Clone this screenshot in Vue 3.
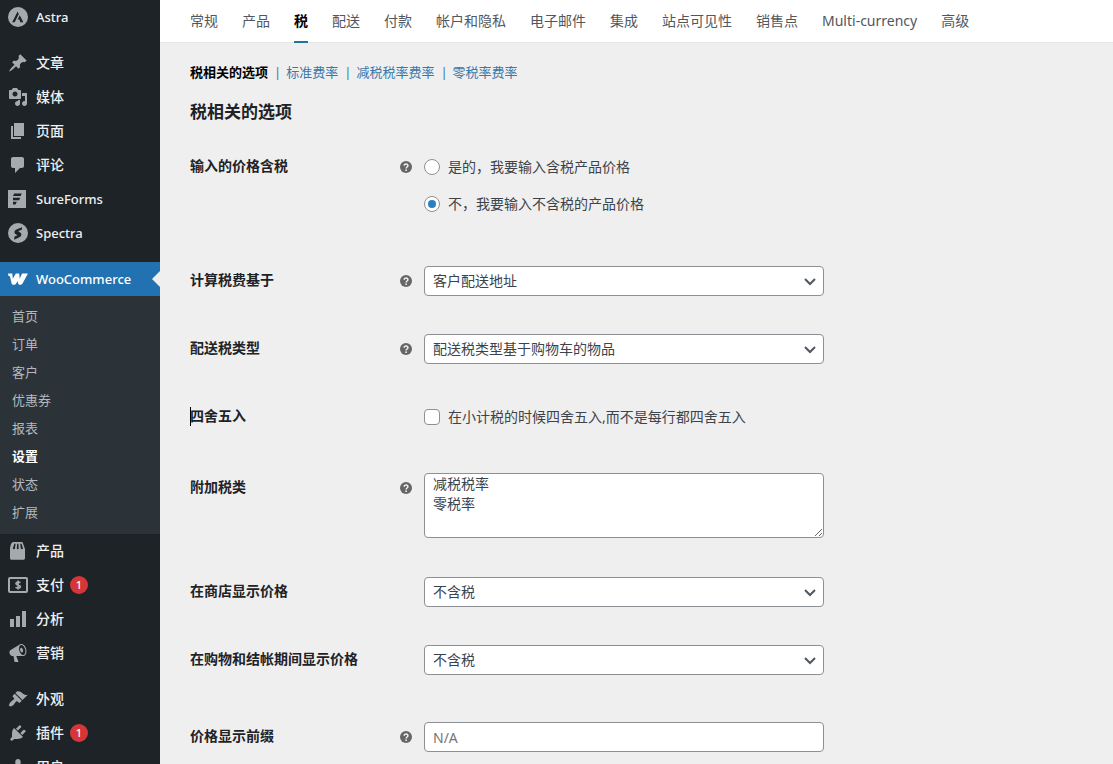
<script setup>
import { ref } from 'vue'

const icons = {
  astra:
    '<path fill-rule="evenodd" d="M10 0a10 10 0 1 0 0 20a10 10 0 0 0 0-20zM9.6 4.4L4.2 15.2h2.5l4.1-8.2zM11.8 8.2l-2.2 4.3h1.8l.9 2.7h3z"/>',
  pin: '<path d="M10.44 3.02l1.82-1.82 6.36 6.35-1.83 1.82c-1.05-.68-2.48-.57-3.41.36l-.75.75c-.92.93-1.04 2.35-.35 3.41l-1.83 1.82-2.41-2.41-2.8 2.79c-.42.42-3.38 2.71-3.8 2.29s1.86-3.39 2.28-3.81l2.79-2.79L4.1 9.36l1.83-1.82c1.05.69 2.48.57 3.4-.36l.75-.75c.93-.92 1.05-2.35.36-3.41z"/>',
  media:
    '<path d="M13 11V4c0-.55-.45-1-1-1h-1.67L9 1H5L3.67 3H2c-.55 0-1 .45-1 1v7c0 .55.45 1 1 1h10c.55 0 1-.45 1-1zM7 4.5c1.38 0 2.5 1.12 2.5 2.5S8.38 9.5 7 9.5 4.5 8.38 4.5 7 5.62 4.5 7 4.5zM14 6h5v10.5c0 1.38-1.12 2.5-2.5 2.5S14 17.88 14 16.5s1.12-2.5 2.5-2.5c.17 0 .34.02.5.05V9h-3V6zm-4 8.05V13h2v3.5c0 1.38-1.12 2.5-2.5 2.5S7 17.88 7 16.5 8.12 14 9.5 14c.17 0 .34.02.5.05z"/>',
  page: '<path d="M6 15V2h10v13H6zm-1 1h8v2H3V5h2v11z"/>',
  comment:
    '<path d="M5 2h9c1.1 0 2 .9 2 2v7c0 1.1-.9 2-2 2h-2l-5 5v-5H5c-1.1 0-2-.9-2-2V4c0-1.1.9-2 2-2z"/>',
  sureforms:
    '<path fill-rule="evenodd" d="M0 1h18v18H0zM6.2 4.6h7.6l-1.2 2.4H5zM5 8.8h7.3l-1.2 2.4H5zM5 12.8h3.8l-1.3 2.6H5z"/>',
  spectra:
    '<path fill-rule="evenodd" d="M10 0a10 10 0 1 0 0 20a10 10 0 0 0 0-20zM14 4.2l-5.6 2.3c-2.4 1-2.6 3.6-.7 4.7l1.9 1.1-3.3 1.5v3l5-2.5c2.6-1.3 2.7-3.7.8-4.8L10.2 8.3 14 6.6z"/>',
  woo: '<path d="M.1 4.6h4.2l.5 5.2 3-5.2h3.4l.5 5.2 2.4-5.2h5.8l-5.2 9.6c-.7 1.2-1.5 1.6-2.5 1.6-1.2 0-1.900-.6-2.200-1.900l-.4-1.700-1.300 2.100c-.7 1.100-1.400 1.500-2.500 1.500-1.200 0-2-.5-2.300-1.900L2.200 8.300C2 7.300 1.600 7 .4 7z"/>',
  products:
    '<path fill-rule="evenodd" d="M5.500 1h9L17 8v9c0 1-.6 1.800-1.600 1.800H3.600C2.600 18.800 2 18 2 17V8c.3-3 1-7 3.500-7zM6.400 2.800L4.800 7.600c.6 1 2 .8 2.200-.4l.6-4.400zM9.200 2.800l-.4 4.600c.3 1 1.500 1 1.900 0l-.3-4.600zM12.200 2.800l.6 4.600c.3 1 1.700 1.100 2.200.2l-1.400-4.800z"/>',
  payments:
    '<g fill="none" stroke="currentColor"><rect x="1" y="3" width="18" height="14" rx="1" stroke-width="2"/><path stroke-width="1.700" d="M12.400 7.700C11.700 6.900 8 6.700 8 8.500c0 1.900 4.400 1.200 4.400 3.200 0 1.700-3.700 1.700-4.800.5M10.100 5.500v9"/></g>',
  chart: '<path d="M18 18V2h-4v16h4zm-6 0V7H8v11h4zm-6 0v-8H2v8h4z"/>',
  megaphone:
    '<path fill-rule="evenodd" d="M18.150 5.940c.46 1.620.38 3.220-.02 4.480-.42 1.280-1.260 2.180-2.300 2.480-.16.06-.26.06-.4.06-.06.02-.12.02-.18.02-.06.02-.14.02-.22.02h-6.800l2.220 5.500c.02.14-.06.26-.14.34-.08.1-.24.16-.34.16H6.950c-.1 0-.26-.06-.34-.16-.08-.08-.16-.2-.14-.34l-1-5.500H4.250l-.02-.02c-.5.06-1.080-.18-1.540-.62s-.88-1.080-1.060-1.880c-.24-.8-.2-1.560-.02-2.200.18-.62.58-1.080 1.060-1.300l.02-.02 9-5.400c.1-.06.18-.1.24-.16.06-.04.14-.08.24-.12.16-.08.28-.12.5-.18 1.040-.3 2.240.1 3.220.98s1.840 2.240 2.260 3.860zm-2.580 5.980h-.02c.4-.1.74-.34 1.040-.7.58-.7.86-1.760.86-3.040 0-.64-.1-1.300-.28-1.980-.34-1.360-1.020-2.500-1.780-3.240s-1.680-1.100-2.460-.88c-.82.22-1.400.96-1.700 2-.32 1.040-.28 2.360.06 3.720.38 1.360 1 2.500 1.800 3.240.78.74 1.620 1.100 2.480.88zm-2.540-7.080c.22-.04.42-.02.62.04.38.16.76.48 1.020 1s.42 1.200.42 1.780c0 .3-.04.56-.12.8-.18.48-.44.84-.86.94-.34.1-.8-.06-1.140-.4s-.64-.86-.78-1.500c-.18-.62-.12-1.240.02-1.720s.48-.84.82-.94z"/>',
  brush:
    '<path d="M14.480 11.060L7.410 3.990l1.500-1.500c.5-.56 2.300-.47 3.510.32 1.210.8 1.430 1.280 2.910 2.100 1.180.64 2.450 1.260 4.450.85zm-.71.71L6.700 4.700 4.930 6.470c-.39.39-.39 1.020 0 1.410l1.060 1.060c.39.39.39 1.030 0 1.420-.6.6-1.430 1.110-2.210 1.690-.35.26-.7.53-1.010.84C1.430 14.230.4 16.080 1.400 17.070c.99 1 2.840-.03 4.180-1.360.31-.31.58-.66.85-1.020.57-.78 1.080-1.610 1.690-2.210.39-.39 1.020-.39 1.410 0l1.060 1.060c.39.39 1.020.39 1.410 0z"/>',
  plug: '<path d="M13.110 4.360L9.870 7.600 8 5.730l3.240-3.240c.35-.34 1.050-.2 1.560.32.52.51.66 1.210.31 1.550zm-8 1.770l.91-1.120 9.010 9.010-1.190.84c-.71.71-2.630 1.160-3.820 1.160H6.140L4.900 17.260c-.59.59-1.540.59-2.120 0-.59-.58-.59-1.530 0-2.120l1.240-1.240v-3.880c0-1.130.4-3.190 1.090-3.890zm7.260 3.970l3.240-3.240c.34-.35 1.040-.21 1.550.31.52.51.66 1.210.31 1.550l-3.240 3.250z"/>',
  user: '<path d="M10 9.250c-2.270 0-2.730-3.440-2.730-3.440C7 4.020 7.820 2 9.970 2c2.160 0 2.980 2.020 2.710 3.810 0 0-.41 3.440-2.680 3.440zM4 18v-4c0-2.500 2-4 4-4h4c2 0 4 1.500 4 4v4z"/>'
}

const menu = [
  [{ label: 'Astra', icon: 'astra', latin: true }],
  [
    { label: '文章', icon: 'pin' },
    { label: '媒体', icon: 'media' },
    { label: '页面', icon: 'page' },
    { label: '评论', icon: 'comment' },
    { label: 'SureForms', icon: 'sureforms', latin: true },
    { label: 'Spectra', icon: 'spectra', latin: true }
  ],
  [
    {
      label: 'WooCommerce',
      icon: 'woo',
      latin: true,
      current: true,
      children: ['首页', '订单', '客户', '优惠券', '报表', '设置', '状态', '扩展']
    },
    { label: '产品', icon: 'products' },
    { label: '支付', icon: 'payments', count: 1 },
    { label: '分析', icon: 'chart' },
    { label: '营销', icon: 'megaphone' }
  ],
  [
    { label: '外观', icon: 'brush' },
    { label: '插件', icon: 'plug', count: 1 },
    { label: '用户', icon: 'user' }
  ]
]

const tabs = ['常规', '产品', '税', '配送', '付款', '帐户和隐私', '电子邮件', '集成', '站点可见性', '销售点', 'Multi-currency', '高级']
const sections = ['税相关的选项', '标准费率', '减税税率费率', '零税率费率']

const rows = [
  {
    id: 'prices-include-tax',
    label: '输入的价格含税',
    type: 'radio',
    help: true,
    options: [
      { value: 'yes', label: '是的，我要输入含税产品价格' },
      { value: 'no', label: '不，我要输入不含税的产品价格' }
    ]
  },
  { id: 'tax-based-on', label: '计算税费基于', type: 'select', help: true, value: '客户配送地址' },
  { id: 'shipping-tax-class', label: '配送税类型', type: 'select', help: true, value: '配送税类型基于购物车的物品' },
  { id: 'tax-round', label: '四舍五入', type: 'checkbox', text: '在小计税的时候四舍五入,而不是每行都四舍五入', caret: true },
  { id: 'tax-classes', label: '附加税类', type: 'textarea', help: true, value: '减税税率\n零税率' },
  { id: 'tax-display-shop', label: '在商店显示价格', type: 'select', value: '不含税' },
  { id: 'tax-display-cart', label: '在购物和结帐期间显示价格', type: 'select', value: '不含税' },
  { id: 'price-suffix', label: '价格显示前缀', type: 'text', help: true, placeholder: 'N/A' }
]

const includeTax = ref('no')
const roundSubtotal = ref(false)
</script>

<template>
  <div class="admin">
    <nav class="sidebar" aria-label="主菜单">
      <ul v-for="(group, g) in menu" :key="g" class="group">
        <li v-for="item in group" :key="item.label">
          <a href="#" class="item" :class="{ current: item.current, latin: item.latin }">
            <svg class="icon" viewBox="0 0 20 20" aria-hidden="true" v-html="icons[item.icon]"></svg>
            <span>{{ item.label }}</span>
            <span v-if="item.count" class="count">{{ item.count }}</span>
          </a>
          <ul v-if="item.children" class="submenu">
            <li v-for="child in item.children" :key="child">
              <a href="#" :class="{ active: child === '设置' }">{{ child }}</a>
            </li>
          </ul>
        </li>
      </ul>
    </nav>

    <main class="content">
      <nav class="tabs" aria-label="设置">
        <a v-for="tab in tabs" :key="tab" href="#" :class="{ active: tab === '税' }">{{ tab }}</a>
      </nav>

      <div class="page">
        <ul class="sections">
          <li v-for="(section, i) in sections" :key="section">
            <a href="#" :class="{ active: i === 0 }">{{ section }}</a>
            <span v-if="i < sections.length - 1" class="bar">|</span>
          </li>
        </ul>

        <h2>税相关的选项</h2>

        <form class="form" @submit.prevent>
          <div v-for="row in rows" :key="row.id" class="row" :class="'row-' + row.type">
            <span v-if="row.type === 'radio'" :id="row.id" class="label">{{ row.label }}</span>
            <label v-else :for="row.id" class="label" :class="{ caret: row.caret }">{{ row.label }}</label>

            <span class="help">
              <svg v-if="row.help" viewBox="0 0 12 12" role="img" aria-label="帮助">
                <circle cx="6" cy="6" r="6" fill="#666" />
                <path d="M4.200 4.700c0-2.300 3.700-2.200 3.700 0 0 1.300-1.800 1.300-1.800 2.700" fill="none" stroke="#efefef" stroke-width="1.500" />
                <circle cx="6.100" cy="9.200" r=".9" fill="#efefef" />
              </svg>
            </span>

            <div v-if="row.type === 'radio'" class="control choices" role="radiogroup" :aria-labelledby="row.id">
              <label v-for="opt in row.options" :key="opt.value" class="choice">
                <input v-model="includeTax" type="radio" :name="row.id" :value="opt.value" />
                <span>{{ opt.label }}</span>
              </label>
            </div>
            <div v-else-if="row.type === 'checkbox'" class="control">
              <label class="choice">
                <input :id="row.id" v-model="roundSubtotal" type="checkbox" />
                <span>{{ row.text }}</span>
              </label>
            </div>
            <div v-else-if="row.type === 'select'" class="control select">
              <select :id="row.id"><option>{{ row.value }}</option></select>
              <svg class="chevron" viewBox="0 0 12 8" aria-hidden="true">
                <path d="M1 1l5 5 5-5" fill="none" stroke="#50575e" stroke-width="2" />
              </svg>
            </div>
            <div v-else-if="row.type === 'textarea'" class="control">
              <textarea :id="row.id" :value="row.value"></textarea>
            </div>
            <div v-else class="control">
              <input :id="row.id" type="text" :placeholder="row.placeholder" />
            </div>
          </div>
        </form>
      </div>
    </main>
  </div>
</template>

<style>
html {
  background: #efefef;
}
</style>

<style scoped>
.admin,
.admin * {
  box-sizing: border-box;
}

.admin {
  display: flex;
  height: 100vh;
  overflow: hidden;
  background: #efefef;
  color: #3c434a;
  font-family: "Noto Sans", "Noto Sans CJK SC", sans-serif;
  font-size: 14px;
  line-height: 20px;
}

ul {
  margin: 0;
  padding: 0;
  list-style: none;
}

a {
  text-decoration: none;
}

.sidebar {
  flex: none;
  width: 160px;
  background: #1d2327;
}

.group + .group {
  margin-top: 12px;
}

.item {
  position: relative;
  display: flex;
  align-items: center;
  gap: 8px;
  height: 34px;
  padding: 0 8px;
  color: #f0f0f1;
  font-weight: 500;
}

.latin {
  font-size: 13px;
  font-weight: 500;
}

.icon {
  flex: none;
  width: 20px;
  height: 20px;
  fill: currentColor;
  color: #a7aaad;
}

.current {
  background: #2271b1;
  color: #fff;
}

.current .icon {
  color: #fff;
}

.current::after {
  content: "";
  position: absolute;
  right: 0;
  top: 9px;
  border: 8px solid transparent;
  border-left-width: 0;
  border-right-color: #efefef;
}

.count {
  width: 18px;
  height: 18px;
  margin-left: -2px;
  border-radius: 9px;
  background: #d63638;
  color: #fff;
  font-size: 11px;
  line-height: 18px;
  text-align: center;
}

.submenu {
  padding: 6px 0 8px;
  background: #2c3338;
}

.submenu a {
  display: block;
  padding: 4px 12px;
  color: #b4b9be;
  font-size: 13px;
}

.submenu .active {
  color: #fff;
  font-weight: 700;
}

.content {
  flex: 1;
  min-width: 0;
}

.tabs {
  display: flex;
  gap: 24px;
  height: 43px;
  padding: 0 30px;
  background: #fff;
  border-bottom: 1px solid #e6e6e6;
  white-space: nowrap;
}

.tabs a {
  height: 43px;
  line-height: 42px;
  color: #50575e;
}

.tabs .active {
  border-bottom: 2px solid #21759b;
  color: #000;
  font-weight: 700;
}

.page {
  padding: 19px 30px;
}

.sections {
  display: flex;
  gap: 5px;
  font-size: 13px;
}

.sections li {
  display: flex;
  gap: 6px;
}

.sections a,
.bar {
  color: #3878ab;
}

.sections .active {
  color: #000;
  font-weight: 700;
}

h2 {
  margin: 18px 0 9px;
  color: #1d2327;
  font-size: 17px;
  font-weight: 700;
  line-height: 24px;
}

.row {
  display: grid;
  grid-template-columns: 210px 12px minmax(0, 400px);
  align-items: start;
  padding: 19px 0;
}

.row-radio {
  padding-bottom: 28px;
}

.row-textarea {
  padding: 22px 0 20px;
}

.row-text {
  padding-top: 28px;
}

.label {
  position: relative;
  color: #1d2327;
  font-weight: 700;
  line-height: 28px;
}

.caret::before {
  content: "";
  position: absolute;
  left: 0;
  top: 5px;
  width: 1px;
  height: 19px;
  background: #000;
}

.help {
  display: flex;
  align-items: center;
  height: 30px;
}

.help svg {
  width: 12px;
  height: 12px;
}

.control {
  margin-left: 12px;
  margin-right: -12px;
}

.choices {
  display: grid;
  gap: 7px;
}

.choice {
  display: flex;
  align-items: center;
  gap: 8px;
  min-height: 30px;
}

input[type="radio"],
input[type="checkbox"] {
  appearance: none;
  display: grid;
  place-items: center;
  flex: none;
  width: 16px;
  height: 16px;
  margin: 0;
  border: 1px solid #8c8f94;
  background: #fff;
}

input[type="radio"] {
  border-radius: 50%;
}

input[type="checkbox"] {
  border-radius: 4px;
}

input[type="radio"]:checked::before {
  content: "";
  width: 8px;
  height: 8px;
  border-radius: 50%;
  background: #2b7fc0;
}

input[type="checkbox"]:checked::before {
  content: "";
  width: 8px;
  height: 8px;
  background: #2b7fc0;
}

select,
textarea,
input[type="text"] {
  display: block;
  width: 100%;
  height: 30px;
  margin: 0;
  padding: 0 8px;
  border: 1px solid #8c8f94;
  border-radius: 4px;
  background: #fff;
  color: #3c434a;
  font: inherit;
}

textarea {
  height: 65px;
  resize: vertical;
}

input::placeholder {
  color: #757575;
}

.select {
  position: relative;
}

select {
  appearance: none;
  padding-right: 24px;
}

.chevron {
  position: absolute;
  right: 8px;
  top: 12px;
  width: 12px;
  height: 8px;
  pointer-events: none;
}
</style>
